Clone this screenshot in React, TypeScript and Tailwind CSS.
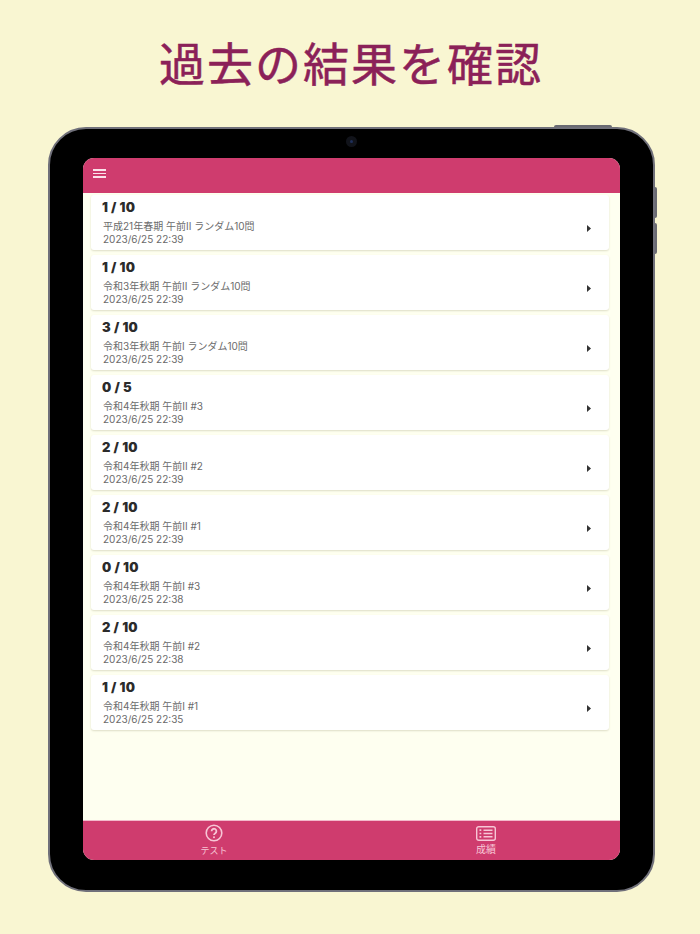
const results = [
  { score: '1 / 10', name: '平成21年春期 午前II ランダム10問', date: '2023/6/25 22:39' },
  { score: '1 / 10', name: '令和3年秋期 午前II ランダム10問', date: '2023/6/25 22:39' },
  { score: '3 / 10', name: '令和3年秋期 午前I ランダム10問', date: '2023/6/25 22:39' },
  { score: '0 / 5', name: '令和4年秋期 午前II #3', date: '2023/6/25 22:39' },
  { score: '2 / 10', name: '令和4年秋期 午前II #2', date: '2023/6/25 22:39' },
  { score: '2 / 10', name: '令和4年秋期 午前II #1', date: '2023/6/25 22:39' },
  { score: '0 / 10', name: '令和4年秋期 午前I #3', date: '2023/6/25 22:38' },
  { score: '2 / 10', name: '令和4年秋期 午前I #2', date: '2023/6/25 22:38' },
  { score: '1 / 10', name: '令和4年秋期 午前I #1', date: '2023/6/25 22:35' },
];

const fontStack = "font-['Inter','Noto_Sans_CJK_JP',sans-serif]";

function ResultCard({ score, name, date }: { score: string; name: string; date: string }) {
  return (
    <div className="flex h-[55px] shrink-0 items-start justify-between rounded-[3px] bg-white pt-[3px] pl-3 pr-[18px] shadow-[0_1px_2px_#dedec6]">
      <div className="flex flex-col">
        <span className="-ml-px h-[19px] text-[13px] leading-[19px] font-black tracking-[0.3px] text-[#2b2b2b]">{score}</span>
        <span className="mt-[3px] h-[13px] text-[10px] leading-[13px] text-[#6b6b6b]">{name}</span>
        <span className="h-[13px] text-[10px] leading-[13px] text-[#6b6b6b]">{date}</span>
      </div>
      {/* caret */}
      <svg width="4" height="7" viewBox="0 0 4 7" className="mt-[27px] fill-[#333]">
        <path d="M0 0 L4 3.5 L0 7 Z" />
      </svg>
    </div>
  );
}

export default function App() {
  return (
    <div className={`flex h-[934px] w-[700px] flex-col items-center overflow-hidden bg-[#f9f6d2] ${fontStack}`}>
      <h1 className="mt-[34px] ml-[2px] h-[60px] text-[46px] leading-[60px] font-normal tracking-[2px] whitespace-nowrap text-[#8b2158] [-webkit-text-stroke:0.5px_#8b2158]">
        過去の結果を確認
      </h1>

      {/* device frame */}
      <div className="relative mt-[33px] ml-[3px] h-[765px] w-[607px] rounded-[38px] border-[2px] border-[#70707a] bg-black px-[33px] pt-[29px] pb-[30px]">
        <div className="absolute top-[-4px] right-[41px] h-[2px] w-[58px] rounded-t-sm bg-[#6a6a72]" />
        <div className="absolute top-[58px] right-[-4px] h-[31px] w-[2px] rounded-r-sm bg-[#6a6a72]" />
        <div className="absolute top-[94px] right-[-4px] h-[31px] w-[2px] rounded-r-sm bg-[#6a6a72]" />
        <div className="absolute top-[7px] left-[296px] flex h-[11px] w-[11px] items-center justify-center rounded-full bg-[#11131a]">
          <div className="h-[3px] w-[3px] rounded-full bg-[#1e2f5a]" />
        </div>

        <div className="flex h-full w-full flex-col overflow-hidden rounded-[11px] bg-[#fefff0]">
          <div className="flex h-[35px] shrink-0 items-center bg-[#cf3c6e] pb-[4px] pl-[10px]">
            <div className="flex w-[13px] flex-col gap-[2px]">
              <div className="h-[1.5px] bg-[#fbe3ea]" />
              <div className="h-[1.5px] bg-[#fbe3ea]" />
              <div className="h-[1.5px] bg-[#fbe3ea]" />
            </div>
          </div>

          <div className="flex flex-1 flex-col gap-[5px] pt-[2px] pr-[11px] pl-2">
            {results.map((r, i) => (
              <ResultCard key={i} {...r} />
            ))}
          </div>

          <div className="flex h-[40px] shrink-0 border-t border-[#f3b9cb] bg-[#cf3c6e] text-[#f7c6d6]">
            <div className="flex flex-1 flex-col items-center pt-[3px] pr-[10px]">
              <svg width="18" height="18" viewBox="0 0 18 18" fill="none" stroke="currentColor" strokeWidth="1.6">
                <circle cx="9" cy="9" r="7.8" />
                <path d="M6.6 7.2a2.4 2.4 0 1 1 3.7 2c-.8.5-1.3 1-1.3 1.8" strokeWidth="1.8" />
                <circle cx="9" cy="13.2" r="1" fill="currentColor" stroke="none" />
              </svg>
              <span className="mt-[2px] text-[9px] leading-[13px]">テスト</span>
            </div>
            <div className="flex flex-1 flex-col items-center pt-[5px] pr-[3px]">
              <svg width="20" height="15" viewBox="0 0 20 15" fill="none" stroke="currentColor" strokeWidth="1.4">
                <rect x="0.7" y="0.7" width="18.6" height="13.6" rx="2" />
                <path d="M7.5 4.2h9M7.5 7.5h9M7.5 10.8h9" strokeWidth="1.5" />
                <path d="M3.5 4.2h1.8M3.5 7.5h1.8M3.5 10.8h1.8" strokeWidth="1.7" />
              </svg>
              <span className="mt-[2px] text-[10px] leading-[13px]">成績</span>
            </div>
          </div>
        </div>
      </div>
    </div>
  );
}
